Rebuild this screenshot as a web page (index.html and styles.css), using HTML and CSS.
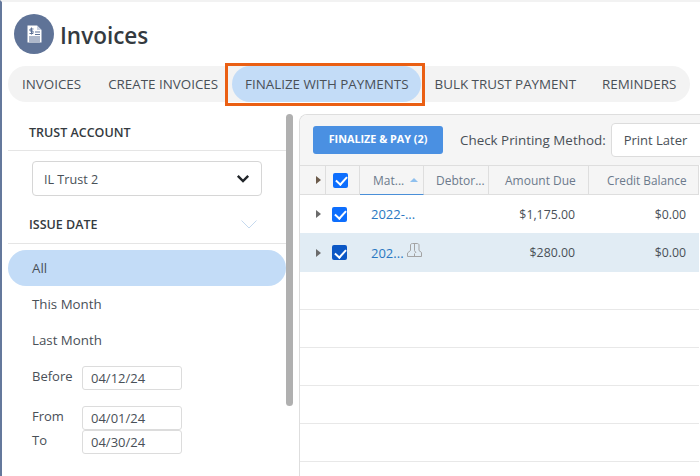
FILE: index.html
```html
<!DOCTYPE html>
<html lang="en">
<head>
<meta charset="utf-8">
<title>Invoices</title>
<link rel="stylesheet" href="styles.css">
</head>
<body>
<div class="page">
  <span class="stripe-gap"></span>
  <header class="title-row">
    <span class="title-icon">
      <svg width="15" height="18" viewBox="0 0 15 18"><path d="M.5 .5H10L14.500 5V17.500H.5Z" fill="#fff"/><path d="M10 .5V5H14.500" fill="#c9d2e2"/><path d="M4.500 2.500V9.500M6.500 4H3V6H6V8.500H2.500" fill="none" stroke="#5f7397" stroke-width="1"/><path d="M8 7H13M8 9.500H13M2 12H13M2 14H13M2 16H13" stroke="#5f7397" stroke-width="1.100"/></svg>
    </span>
    <h1 class="title">Invoices</h1>
  </header>
  <nav class="tabs">
    <a class="tab tab-first">INVOICES</a>
    <a class="tab tab-create">CREATE INVOICES</a>
    <a class="tab tab-active">FINALIZE WITH PAYMENTS</a>
    <a class="tab tab-bulk">BULK TRUST PAYMENT</a>
    <a class="tab tab-rem">REMINDERS</a>
    <span class="tab-highlight"></span>
  </nav>
  <div class="content">
    <aside class="side">
      <div class="side-head">TRUST ACCOUNT</div>
      <div class="select-wrap">
        <div class="select">
          <span class="select-value">IL Trust 2</span>
          <svg width="14" height="9" viewBox="0 0 14 9"><path d="M1.800 1.800L7 7L12.200 1.800" fill="none" stroke="#212529" stroke-width="2.400"/></svg>
        </div>
      </div>
      <div class="side-head side-head-date">
        <span>ISSUE DATE</span>
        <svg width="16" height="9" viewBox="0 0 16 9"><path d="M.5 .5L8 8L15.500 .5" fill="none" stroke="#c5d9ee" stroke-width="1"/></svg>
      </div>
      <ul class="filters">
        <li class="filter filter-active">All</li>
        <li class="filter">This Month</li>
        <li class="filter">Last Month</li>
      </ul>
      <div class="date-row date-before"><label>Before</label><span class="date">04/12/24</span></div>
      <div class="date-row date-from"><label>From</label><span class="date">04/01/24</span></div>
      <div class="date-row date-to"><label>To</label><span class="date">04/30/24</span></div>
      <span class="scrollbar"></span>
    </aside>
    <main class="panel">
      <div class="toolbar">
        <button class="pay">FINALIZE &amp; PAY (2)</button>
        <span class="method-label">Check Printing Method:</span>
        <span class="method">Print Later</span>
      </div>
      <div class="grid">
        <div class="gh c-exp"><i class="caret caret-head"></i></div>
        <div class="gh c-chk"><i class="check"></i></div>
        <div class="gh gh-sorted">Mat... <i class="sort"></i></div>
        <div class="gh gh-debtor">Debtor...</div>
        <div class="gh gh-amount">Amount Due</div>
        <div class="gh gh-credit">Credit Balance</div>

        <div class="gc c-exp"><i class="caret"></i></div>
        <div class="gc c-chk"><i class="check"></i></div>
        <div class="gc link">2022-...</div>
        <div class="gc"></div>
        <div class="gc num num-amount">$1,175.00</div>
        <div class="gc num">$0.00</div>

        <div class="gc sel c-exp"><i class="caret"></i></div>
        <div class="gc sel c-chk"><i class="check check-dark"></i></div>
        <div class="gc sel link">202...
          <svg class="people" width="15" height="14" viewBox="0 0 15 14"><path d="M3.500 7.500V2C3.500 1 4.500 .5 5.500 .5H10C11 .5 12 1 12 2V7.500L14.500 9.500V13.500H.5V10L3.500 7.500ZM7.500 1V7.500M7.500 7.500L9 10M7.500 13.500V10.500" fill="none" stroke="#a3a3a3" stroke-width="1"/></svg>
        </div>
        <div class="gc sel"></div>
        <div class="gc sel num num-amount">$280.00</div>
        <div class="gc sel num">$0.00</div>

        <div class="empty"></div>
        <div class="empty"></div>
        <div class="empty"></div>
        <div class="empty"></div>
        <div class="empty"></div>
      </div>
    </main>
  </div>
</div>
</body>
</html>
```

FILE: styles.css
```css
* { box-sizing: border-box; }
html, body { margin: 0; height: 100%; overflow: hidden; background: #fff; }
body { font-family: "Open Sans", "Noto Sans", sans-serif; color: #495057; font-size: 13px; }
.page {
  position: relative;
  width: 700px; height: 476px; overflow: hidden;
  border-left: 2px solid #64789c;
  border-top: 2px solid #f2f2f2;
  padding: 12px 0 0 6px;
}
.stripe-gap { position: absolute; left: -2px; top: 17px; width: 2px; height: 1px; background: #fff; }
.title-row { display: flex; align-items: center; gap: 6px; height: 40px; padding-left: 6px; }
.title-icon { width: 40px; height: 40px; border-radius: 50%; background: #5f7397; display: flex; align-items: center; justify-content: center; }
.title { margin: 0; padding-top: 3px; font-size: 22.500px; font-weight: 600; color: #343a40; line-height: 40px; }
.tabs {
  position: relative; display: flex; align-items: center;
  width: 682px; height: 36px; margin-top: 12px;
  background: #f3f3f3; border-radius: 18px;
}
.tab { display: block; line-height: 36px; font-size: 13.380px; color: #495057; white-space: nowrap; }
.tab-first { margin-left: 14px; }
.tab-create { margin-left: 27px; }
.tab-active { margin-left: 14px; padding: 0 12px 0 13px; background: #c3dcf7; border-radius: 18px; }
.tab-bulk { margin-left: 14px; }
.tab-rem { margin-left: 26px; }
.tab-highlight {
  position: absolute; left: 217px; top: -3px; width: 200px; height: 43px;
  border: 3px solid #ea5f13;
}
.content { display: flex; margin-top: 12px; }
.side { position: relative; width: 278px; height: 362px; flex: none; }
.side-head {
  display: flex; align-items: center; justify-content: space-between;
  height: 37px; padding: 0 29px 0 21px;
  border-bottom: 1px solid #e5e5e5;
  font-size: 12.500px; font-weight: 600; color: #343a40;
}
.select-wrap { padding: 10px 24px 0; }
.select {
  display: flex; align-items: center; justify-content: space-between;
  height: 35px; padding: 0 11px;
  border: 1px solid #d6d6d6; border-radius: 4px;
  font-size: 12.600px; color: #495057;
}
.select-value { padding-top: 1px; }
.side-head-date { height: 38px; margin-top: 10px; }
.filters { list-style: none; margin: 6px 0 0; padding: 0; }
.filter { height: 36px; line-height: 36px; padding-left: 24px; font-size: 13.300px; color: #495057; border-radius: 18px; }
.filter-active { background: #c3dcf7; }
.date-row { display: flex; padding-left: 24px; }
.date-row label { width: 50px; font-size: 13px; color: #495057; line-height: 20px; }
.date {
  display: block; width: 100px; height: 24px; line-height: 22px; padding-left: 8px;
  border: 1px solid #dcdcdc; border-radius: 3px;
  font-size: 13px; color: #495057;
}
.date-before { margin-top: 8px; }
.date-from { margin-top: 16px; }
.scrollbar {
  position: absolute; left: 278px; top: 0; width: 7px; height: 292px;
  background: #b0b0b0; border-radius: 4px;
}
.panel {
  width: 401px; height: 362px; flex: none; margin-left: 13px;
  border: 1px solid #dedede; border-right: 0; border-bottom: 0;
  border-top-left-radius: 8px; overflow: hidden;
}
.toolbar { display: flex; align-items: center; height: 50px; padding-left: 13px; background: #f5f5f5; }
.pay {
  width: 130px; height: 28px; padding: 0 0 3px; border: 0; border-radius: 3px; flex: none;
  background: #4a90e2; color: #fff; font: 700 10.800px "Open Sans", sans-serif;
}
.method-label { margin-left: 17px; font-size: 13.400px; color: #495057; white-space: nowrap; flex: none; }
.method {
  margin-left: 5px; width: 110px; height: 34px; line-height: 32px; padding-left: 12px;
  background: #fff; border: 1px solid #dcdcdc; border-radius: 4px 0 0 4px;
  font-size: 13px; flex: none; color: #495057; white-space: nowrap;
}
.grid {
  display: grid; grid-template-columns: 26px 34px 64px 65px 100px 110px;
  grid-template-rows: 30px 38px 39px;
  grid-auto-rows: 38px;
}
.gh {
  display: flex; align-items: center;
  background: #f5f5f5; border-top: 1px solid #dedede; border-right: 1px solid #dedede; border-bottom: 1px solid #dedede;
  font-size: 12px; color: #6c7a8c; white-space: nowrap; overflow: hidden;
}
.gh-sorted { padding-left: 13px; border-bottom: 1px solid #4a8fd8; gap: 6px; }
.gh-debtor { padding-left: 12px; }
.gh-amount { padding-left: 16px; }
.gh-credit { padding-left: 18px; font-size: 11.800px; }
.gc { display: flex; align-items: center; font-size: 12.300px; color: #495057; background: #fff; white-space: nowrap; }
.c-exp, .c-chk { justify-content: flex-start; }
.c-exp { padding-left: 16px; }
.c-chk { padding-left: 7px; }
.gc.c-chk { padding-left: 6px; }
.link { color: #2a78c2; font-size: 13px; padding-left: 11px; gap: 3px; }
.num { justify-content: flex-end; padding-right: 13px; }
.num-amount { padding-right: 14px; }
.sel { background: #e1ecf4; }
.people { margin-top: -6px; }
.empty { grid-column: 1 / -1; border-bottom: 1px solid #e8e8e8; }
.caret { display: block; width: 0; height: 0; border-left: 5px solid #6b6b6b; border-top: 4px solid transparent; border-bottom: 4px solid transparent; }
.caret-head { border-left-color: #6b5a4a; }
.check {
  position: relative; display: block; width: 15px; height: 15px; border-radius: 2px; background: #0d6efd;
}
.check::after {
  content: ""; position: absolute; left: 5px; top: 1.500px; width: 5px; height: 9px;
  border: solid #fff; border-width: 0 2px 2px 0; transform: rotate(42deg);
}
.check-dark { background: #0b57c5; }
.sort { display: block; width: 0; height: 0; border-bottom: 4px solid #8fc0ee; border-left: 4px solid transparent; border-right: 4px solid transparent; }
```
